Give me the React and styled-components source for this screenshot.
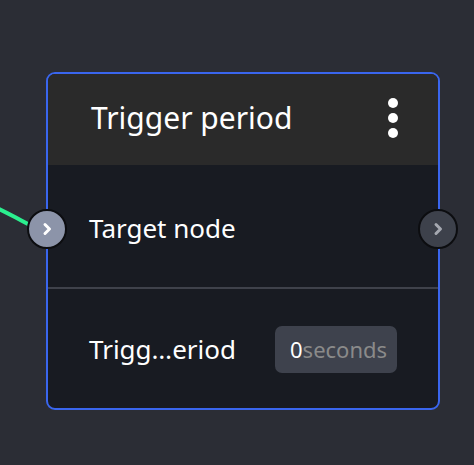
import React from 'react';
import styled, { createGlobalStyle } from 'styled-components';

const GlobalStyle = createGlobalStyle`
  html, body {
    margin: 0;
    padding: 0;
    background: #2b2d35;
  }
  body {
    font-family: 'Noto Sans', 'Open Sans', sans-serif;
    color: #fff;
  }
`;

const Canvas = styled.div`
  position: relative;
  width: 474px;
  height: 465px;
  padding: 72px 0 0 46px;
  box-sizing: border-box;
  overflow: hidden;
`;

const Edge = styled.svg`
  position: absolute;
  left: 0;
  top: 0;
  pointer-events: none;
`;

const Node = styled.div`
  position: relative;
  width: 394px;
  height: 338px;
  box-sizing: border-box;
  border: 2px solid #3a66ee;
  border-radius: 9px;
  background: #181b22;
  display: flex;
  flex-direction: column;
`;

const Header = styled.div`
  height: 91px;
  flex-shrink: 0;
  box-sizing: border-box;
  background: #2a2a2a;
  border-radius: 7px 7px 0 0;
  display: flex;
  align-items: center;
  justify-content: space-between;
  padding: 0 40px 4px 43px;
`;

const Title = styled.div`
  font-size: 30px;
  font-weight: 400;
  color: #fff;
`;

const MenuButton = styled.div`
  display: flex;
  flex-direction: column;
  gap: 5px;
  span {
    width: 10px;
    height: 10px;
    border-radius: 50%;
    background: #fff;
  }
`;

const Row = styled.div`
  position: relative;
  box-sizing: border-box;
  ${(p) => (p.$height ? `height: ${p.$height}px; flex-shrink: 0;` : 'flex: 1;')}
  display: flex;
  align-items: center;
  justify-content: space-between;
  padding: ${(p) => (p.$divider ? '1px' : '4px')} 41px 0;
  border-top: ${(p) => (p.$divider ? '2px solid #3f424b' : 'none')};
`;

const Label = styled.div`
  font-size: 26px;
  color: #fff;
`;

const Handle = styled.div`
  position: absolute;
  top: calc(50% + 3px);
  ${(p) => (p.$side === 'left' ? 'left: -21px;' : 'right: -20px;')}
  transform: translateY(-50%);
  width: 36px;
  height: 36px;
  border-radius: 50%;
  border: 2px solid #0c0d10;
  background: ${(p) => (p.$side === 'left' ? '#8c94a9' : '#3d414b')};
  display: flex;
  align-items: center;
  justify-content: center;
  color: ${(p) => (p.$side === 'left' ? '#fff' : '#a5a8b0')};
`;

const InputBox = styled.div`
  width: 122px;
  height: 47px;
  box-sizing: border-box;
  border-radius: 7px;
  background: #3e424d;
  display: flex;
  align-items: center;
  padding-left: 15px;
  font-size: 22px;
  white-space: nowrap;
  overflow: hidden;
`;

const Value = styled.span`
  color: #fff;
`;

const Unit = styled.span`
  color: #8a8a8a;
`;

const Chevron = () => (
  <svg width="14" height="16" viewBox="0 0 14 16" fill="none">
    <path d="M5 3.5 L9.5 8 L5 12.5" stroke="currentColor" strokeWidth="3" strokeLinecap="round" strokeLinejoin="round" />
  </svg>
);

function App() {
  return (
    <>
      <GlobalStyle />
      <Canvas>
        <Edge width="60" height="260">
          <path d="M -10 205 C 8 212, 18 220, 40 230" stroke="#2bef8f" strokeWidth="4" fill="none" />
        </Edge>
        <Node>
          <Header>
            <Title>Trigger period</Title>
            <MenuButton>
              <span />
              <span />
              <span />
            </MenuButton>
          </Header>
          <Row $height={122}>
            <Handle $side="left">
              <Chevron />
            </Handle>
            <Label>Target node</Label>
            <Handle $side="right">
              <Chevron />
            </Handle>
          </Row>
          <Row $divider>
            <Label>Trigg…eriod</Label>
            <InputBox>
              <Value>0</Value>
              <Unit>seconds</Unit>
            </InputBox>
          </Row>
        </Node>
      </Canvas>
    </>
  );
}

export default App;
